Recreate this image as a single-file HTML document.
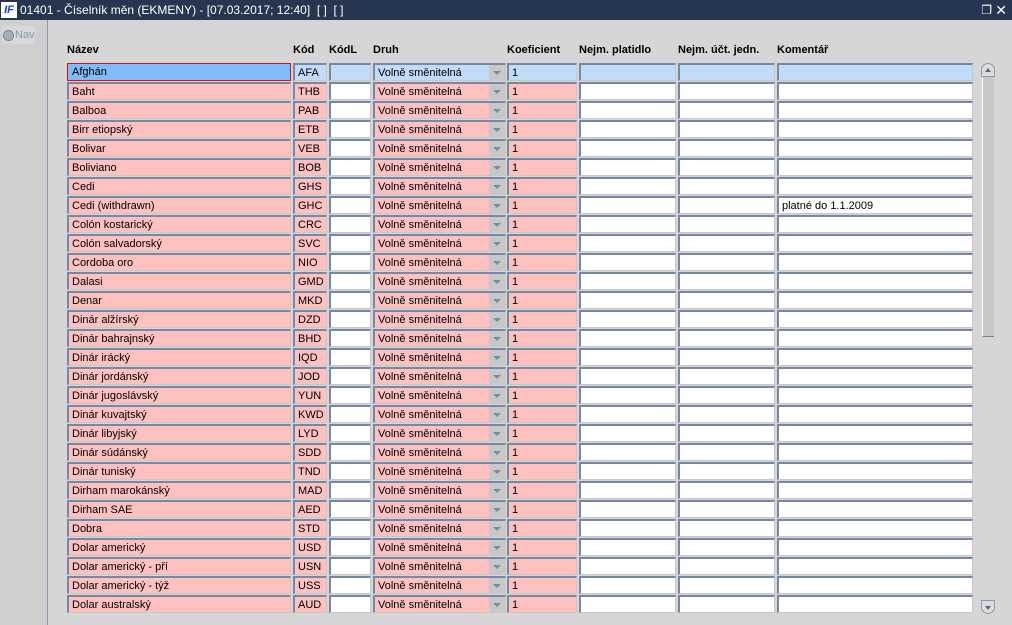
<!DOCTYPE html>
<html><head><meta charset="utf-8"><style>
*{margin:0;padding:0;box-sizing:border-box}
body{width:1012px;height:625px;overflow:hidden;background:#d6d6d6;font-family:"Liberation Sans",Arial,sans-serif;font-size:11px;color:#000;position:relative}
#tb{position:absolute;left:0;top:0;width:1012px;height:20px;background:#263650;color:#fff;font-size:12px;line-height:20px}
#tb .lg{position:absolute;left:1px;top:2px;width:16px;height:16px;background:#fff;color:#1a3cc8;font-weight:bold;font-style:italic;font-size:11px;line-height:16px;text-align:center}
#tb .t{position:absolute;left:20px;top:0}
#lp{position:absolute;left:0;top:20px;width:48px;height:605px;background:#cfcfcf;border-right:1px solid #8d9ab0}
#nav{position:absolute;left:2px;top:6px;width:33px;height:18px;background:#d8d8d8;color:#8a96ac;font-size:11px;line-height:18px;padding-left:13px}
#nav:before{content:"";position:absolute;left:1px;top:4px;width:9px;height:9px;border-radius:50%;background:#a8aeb8;border:1px solid #7c8494}
.h{position:absolute;top:44px;font-weight:bold;font-size:11px}
.r{position:absolute;left:0;height:18px;width:980px}
.r i{position:absolute;top:0;height:18px;font-style:normal;line-height:16px;padding-left:3px;border-top:2px solid #7888a4;border-left:2px solid #7888a4;border-right:1px solid #c8c8c8;border-bottom:1px solid #c8c8c8;background:#fff;white-space:nowrap;overflow:hidden}
.r .a{left:67px;width:224px;background:#ffc0c0}
.r .b{left:293px;width:34px;background:#ffc0c0}
.r .c{left:329px;width:42px}
.r .d{left:373px;width:133px;background:#ffc0c0}
.r .d s{position:absolute;right:0;top:0;width:16px;height:16px;background:#c8c8c8}
.r .d s:after{content:"";position:absolute;left:4px;top:6px;border-left:4px solid transparent;border-right:4px solid transparent;border-top:4px solid #7b8aa4}
.r .e{left:507px;width:70px;background:#ffc0c0}
.r .f{left:579px;width:97px}
.r .g{left:678px;width:97px}
.r .k{left:777px;width:196px}
.sel i{background:#c0dcf8!important}
.sel .a{background:#80bcf8!important;border:1px solid #e01010!important;padding-left:4px}
#sb{position:absolute;left:981px;top:63px;width:14px;height:551px}
#sb .th{position:absolute;left:1px;top:14px;width:12px;height:260px;background:#c8c8c8;border-left:1px solid #fff;border-bottom:1px solid #6f7f9c}
.bt{position:absolute;left:0;width:14px;height:14px;border:1px solid #8a9ab0;background:#dcdcdc}
.up{top:0;border-radius:7px 7px 0 0}
.dn{bottom:0;border-radius:0 0 7px 7px}
.up:after{content:"";position:absolute;left:3px;top:4px;border-left:3px solid transparent;border-right:3px solid transparent;border-bottom:4px solid #55688a}
.dn:after{content:"";position:absolute;left:3px;top:5px;border-left:3px solid transparent;border-right:3px solid transparent;border-top:4px solid #55688a}
</style></head><body>
<div id="tb"><div class="lg">IF</div><div class="t">01401 - Číselník měn (EKMENY) - [07.03.2017; 12:40]&nbsp; [ ]&nbsp; [ ]</div>
<div style="position:absolute;right:20px;top:0;font-size:12px">&#x2750;</div><div style="position:absolute;right:5px;top:0;font-size:14px">✕</div></div>
<div id="lp"><div id="nav">Nav</div></div>
<div class="h" style="left:67px">Název</div>
<div class="h" style="left:293px">Kód</div>
<div class="h" style="left:329px">KódL</div>
<div class="h" style="left:373px">Druh</div>
<div class="h" style="left:507px">Koeficient</div>
<div class="h" style="left:579px">Nejm. platidlo</div>
<div class="h" style="left:678px">Nejm. účt. jedn.</div>
<div class="h" style="left:777px">Komentář</div>

<div class="r sel" style="top:63px"><i class="a">Afghán</i><i class="b">AFA</i><i class="c"></i><i class="d">Volně směnitelná<s></s></i><i class="e">1</i><i class="f"></i><i class="g"></i><i class="k"></i></div>
<div class="r" style="top:82px"><i class="a">Baht</i><i class="b">THB</i><i class="c"></i><i class="d">Volně směnitelná<s></s></i><i class="e">1</i><i class="f"></i><i class="g"></i><i class="k"></i></div>
<div class="r" style="top:101px"><i class="a">Balboa</i><i class="b">PAB</i><i class="c"></i><i class="d">Volně směnitelná<s></s></i><i class="e">1</i><i class="f"></i><i class="g"></i><i class="k"></i></div>
<div class="r" style="top:120px"><i class="a">Birr etiopský</i><i class="b">ETB</i><i class="c"></i><i class="d">Volně směnitelná<s></s></i><i class="e">1</i><i class="f"></i><i class="g"></i><i class="k"></i></div>
<div class="r" style="top:139px"><i class="a">Bolivar</i><i class="b">VEB</i><i class="c"></i><i class="d">Volně směnitelná<s></s></i><i class="e">1</i><i class="f"></i><i class="g"></i><i class="k"></i></div>
<div class="r" style="top:158px"><i class="a">Boliviano</i><i class="b">BOB</i><i class="c"></i><i class="d">Volně směnitelná<s></s></i><i class="e">1</i><i class="f"></i><i class="g"></i><i class="k"></i></div>
<div class="r" style="top:177px"><i class="a">Cedi</i><i class="b">GHS</i><i class="c"></i><i class="d">Volně směnitelná<s></s></i><i class="e">1</i><i class="f"></i><i class="g"></i><i class="k"></i></div>
<div class="r" style="top:196px"><i class="a">Cedi (withdrawn)</i><i class="b">GHC</i><i class="c"></i><i class="d">Volně směnitelná<s></s></i><i class="e">1</i><i class="f"></i><i class="g"></i><i class="k">platné do 1.1.2009</i></div>
<div class="r" style="top:215px"><i class="a">Colón kostarický</i><i class="b">CRC</i><i class="c"></i><i class="d">Volně směnitelná<s></s></i><i class="e">1</i><i class="f"></i><i class="g"></i><i class="k"></i></div>
<div class="r" style="top:234px"><i class="a">Colón salvadorský</i><i class="b">SVC</i><i class="c"></i><i class="d">Volně směnitelná<s></s></i><i class="e">1</i><i class="f"></i><i class="g"></i><i class="k"></i></div>
<div class="r" style="top:253px"><i class="a">Cordoba oro</i><i class="b">NIO</i><i class="c"></i><i class="d">Volně směnitelná<s></s></i><i class="e">1</i><i class="f"></i><i class="g"></i><i class="k"></i></div>
<div class="r" style="top:272px"><i class="a">Dalasi</i><i class="b">GMD</i><i class="c"></i><i class="d">Volně směnitelná<s></s></i><i class="e">1</i><i class="f"></i><i class="g"></i><i class="k"></i></div>
<div class="r" style="top:291px"><i class="a">Denar</i><i class="b">MKD</i><i class="c"></i><i class="d">Volně směnitelná<s></s></i><i class="e">1</i><i class="f"></i><i class="g"></i><i class="k"></i></div>
<div class="r" style="top:310px"><i class="a">Dinár alžírský</i><i class="b">DZD</i><i class="c"></i><i class="d">Volně směnitelná<s></s></i><i class="e">1</i><i class="f"></i><i class="g"></i><i class="k"></i></div>
<div class="r" style="top:329px"><i class="a">Dinár bahrajnský</i><i class="b">BHD</i><i class="c"></i><i class="d">Volně směnitelná<s></s></i><i class="e">1</i><i class="f"></i><i class="g"></i><i class="k"></i></div>
<div class="r" style="top:348px"><i class="a">Dinár irácký</i><i class="b">IQD</i><i class="c"></i><i class="d">Volně směnitelná<s></s></i><i class="e">1</i><i class="f"></i><i class="g"></i><i class="k"></i></div>
<div class="r" style="top:367px"><i class="a">Dinár jordánský</i><i class="b">JOD</i><i class="c"></i><i class="d">Volně směnitelná<s></s></i><i class="e">1</i><i class="f"></i><i class="g"></i><i class="k"></i></div>
<div class="r" style="top:386px"><i class="a">Dinár jugoslávský</i><i class="b">YUN</i><i class="c"></i><i class="d">Volně směnitelná<s></s></i><i class="e">1</i><i class="f"></i><i class="g"></i><i class="k"></i></div>
<div class="r" style="top:405px"><i class="a">Dinár kuvajtský</i><i class="b">KWD</i><i class="c"></i><i class="d">Volně směnitelná<s></s></i><i class="e">1</i><i class="f"></i><i class="g"></i><i class="k"></i></div>
<div class="r" style="top:424px"><i class="a">Dinár libyjský</i><i class="b">LYD</i><i class="c"></i><i class="d">Volně směnitelná<s></s></i><i class="e">1</i><i class="f"></i><i class="g"></i><i class="k"></i></div>
<div class="r" style="top:443px"><i class="a">Dinár súdánský</i><i class="b">SDD</i><i class="c"></i><i class="d">Volně směnitelná<s></s></i><i class="e">1</i><i class="f"></i><i class="g"></i><i class="k"></i></div>
<div class="r" style="top:462px"><i class="a">Dinár tuniský</i><i class="b">TND</i><i class="c"></i><i class="d">Volně směnitelná<s></s></i><i class="e">1</i><i class="f"></i><i class="g"></i><i class="k"></i></div>
<div class="r" style="top:481px"><i class="a">Dirham marokánský</i><i class="b">MAD</i><i class="c"></i><i class="d">Volně směnitelná<s></s></i><i class="e">1</i><i class="f"></i><i class="g"></i><i class="k"></i></div>
<div class="r" style="top:500px"><i class="a">Dirham SAE</i><i class="b">AED</i><i class="c"></i><i class="d">Volně směnitelná<s></s></i><i class="e">1</i><i class="f"></i><i class="g"></i><i class="k"></i></div>
<div class="r" style="top:519px"><i class="a">Dobra</i><i class="b">STD</i><i class="c"></i><i class="d">Volně směnitelná<s></s></i><i class="e">1</i><i class="f"></i><i class="g"></i><i class="k"></i></div>
<div class="r" style="top:538px"><i class="a">Dolar americký</i><i class="b">USD</i><i class="c"></i><i class="d">Volně směnitelná<s></s></i><i class="e">1</i><i class="f"></i><i class="g"></i><i class="k"></i></div>
<div class="r" style="top:557px"><i class="a">Dolar americký - pří</i><i class="b">USN</i><i class="c"></i><i class="d">Volně směnitelná<s></s></i><i class="e">1</i><i class="f"></i><i class="g"></i><i class="k"></i></div>
<div class="r" style="top:576px"><i class="a">Dolar americký - týž</i><i class="b">USS</i><i class="c"></i><i class="d">Volně směnitelná<s></s></i><i class="e">1</i><i class="f"></i><i class="g"></i><i class="k"></i></div>
<div class="r" style="top:595px"><i class="a">Dolar australský</i><i class="b">AUD</i><i class="c"></i><i class="d">Volně směnitelná<s></s></i><i class="e">1</i><i class="f"></i><i class="g"></i><i class="k"></i></div>

<div id="sb"><div class="th"></div><div class="bt up"></div><div class="bt dn"></div></div>
</body></html>
